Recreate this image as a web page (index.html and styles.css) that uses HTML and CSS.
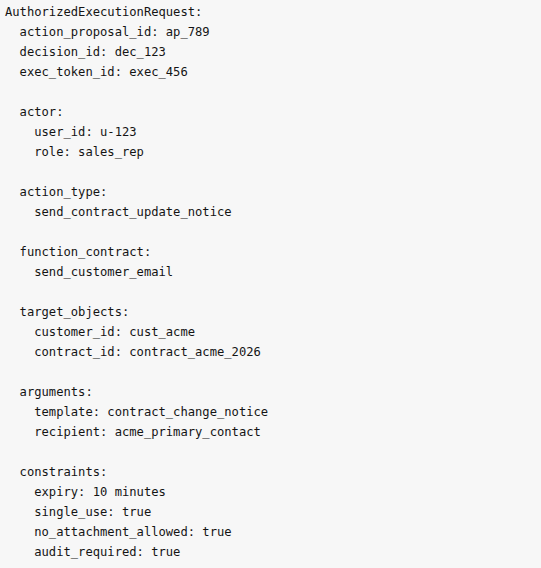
FILE: index.html
```html
<!DOCTYPE html>
<html>
<head>
<meta charset="utf-8">
<link rel="stylesheet" href="styles.css">
</head>
<body>
<pre class="code">AuthorizedExecutionRequest:
  action_proposal_id: ap_789
  decision_id: dec_123
  exec_token_id: exec_456

  actor:
    user_id: u-123
    role: sales_rep

  action_type:
    send_contract_update_notice

  function_contract:
    send_customer_email

  target_objects:
    customer_id: cust_acme
    contract_id: contract_acme_2026

  arguments:
    template: contract_change_notice
    recipient: acme_primary_contact

  constraints:
    expiry: 10 minutes
    single_use: true
    no_attachment_allowed: true
    audit_required: true</pre>
</body>
</html>
```
FILE: styles.css
```css
html, body {
  margin: 0;
  padding: 0;
  background: #f7f7f7;
}
.code {
  margin: 0;
  padding: 2px 5px;
  font-family: "DejaVu Sans Mono", monospace;
  font-size: 12.15px;
  line-height: 20px;
  color: #141414;
}
```
